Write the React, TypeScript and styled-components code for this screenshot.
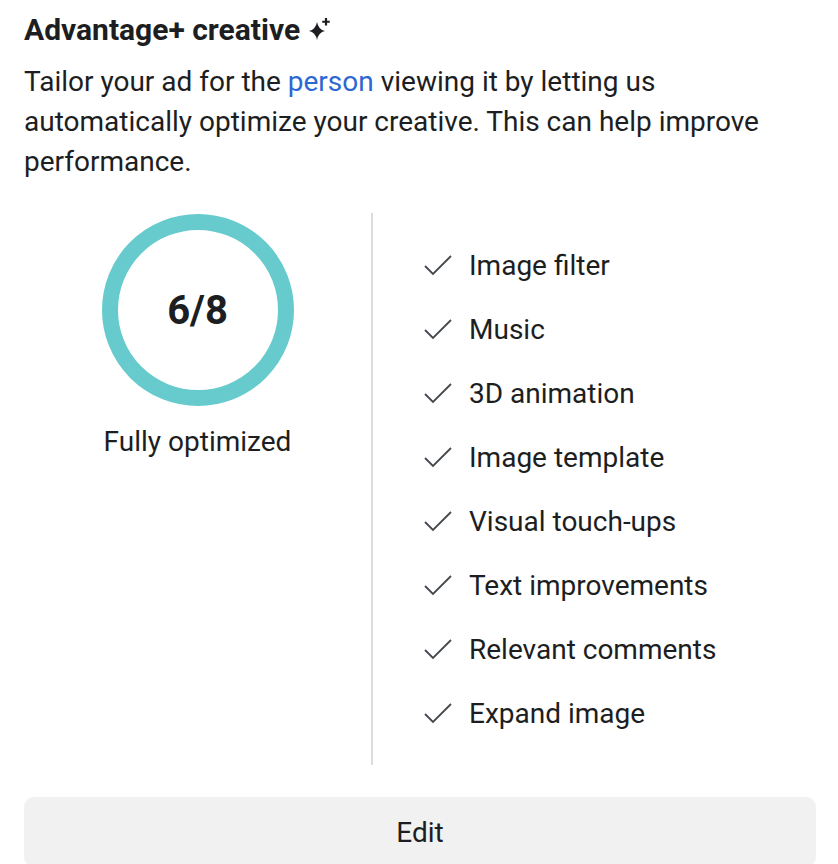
import React from "react";
import styled, { createGlobalStyle } from "styled-components";

const GlobalStyle = createGlobalStyle`
  body {
    margin: 0;
    background: #ffffff;
    font-family: Roboto, "Liberation Sans", sans-serif;
    color: #1c1e21;
  }
`;

const items = [
  "Image filter",
  "Music",
  "3D animation",
  "Image template",
  "Visual touch-ups",
  "Text improvements",
  "Relevant comments",
  "Expand image",
];

const Sparkle = () => (
  <svg width="24" height="26" viewBox="0 0 24 26">
    <path
      d="M9 5 Q10.4 12.6 17 14 Q10.4 15.4 9 23 Q7.6 15.4 1 14 Q7.6 12.6 9 5 Z"
      fill="#1c1e21"
    />
    <path d="M18 1 v7.5 M14.25 4.75 h7.5" stroke="#1c1e21" strokeWidth="2.2" />
  </svg>
);

const Check = () => (
  <svg width="30" height="22" viewBox="0 0 30 22">
    <path d="M2 12 L10 20 L28 2" fill="none" stroke="#444950" strokeWidth="1.8" />
  </svg>
);

const App = () => {
  return (
    <Page>
      <GlobalStyle />
      <Title>
        Advantage+ creative <Sparkle />
      </Title>
      <Desc>
        Tailor your ad for the <Link>person</Link> viewing it by letting us
        automatically optimize your creative. This can help improve
        performance.
      </Desc>
      <Panel>
        <Score>
          <Ring>6/8</Ring>
          <Caption>Fully optimized</Caption>
        </Score>
        <List>
          {items.map((t) => (
            <Item key={t}>
              <Check />
              <span>{t}</span>
            </Item>
          ))}
        </List>
      </Panel>
      <EditButton>Edit</EditButton>
    </Page>
  );
};

export default App;

const Page = styled.div`
  padding: 11px 22px 0 24px;
`;

const Title = styled.div`
  display: flex;
  align-items: center;
  gap: 8px;
  font-size: 30px;
  font-weight: 700;
  line-height: 38px;
  margin-bottom: 13px;
`;

const Desc = styled.div`
  font-size: 28px;
  line-height: 40px;
  color: #1c1e21;
`;

const Link = styled.span`
  color: #2d67d2;
`;

const Panel = styled.div`
  display: flex;
  margin-top: 31px;
`;

const Score = styled.div`
  width: 347px;
  border-right: 2px solid #dadde1;
  display: flex;
  flex-direction: column;
  align-items: center;
`;

const Ring = styled.div`
  box-sizing: border-box;
  width: 192px;
  height: 192px;
  border-radius: 50%;
  border: 16px solid #67cbcd;
  display: flex;
  align-items: center;
  justify-content: center;
  font-size: 40px;
  font-weight: 700;
  margin-top: 1px;
`;

const Caption = styled.div`
  margin-top: 20px;
  font-size: 28px;
  line-height: 32px;
`;

const List = styled.div`
  padding: 20px 0 20px 50px;
  display: flex;
  flex-direction: column;
`;

const Item = styled.div`
  height: 64px;
  display: flex;
  align-items: center;
  gap: 16px;
  font-size: 28px;
`;

const EditButton = styled.button`
  display: block;
  width: 100%;
  height: 70px;
  margin-top: 32px;
  border: none;
  border-radius: 10px;
  background: #f1f1f1;
  font-family: Roboto, "Liberation Sans", sans-serif;
  font-size: 28px;
  color: #1c1e21;
`;
